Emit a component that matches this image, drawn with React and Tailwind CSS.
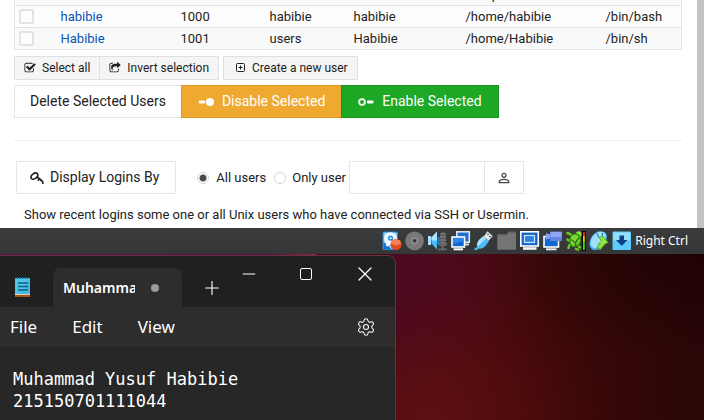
import React from "react";
import { Settings, Plus, X, Minus } from "lucide-react";
import { MdPersonOutline } from "react-icons/md";

const users = [
  { name: "habibie", uid: "1000", group: "habibie", real: "habibie", home: "/home/habibie", shell: "/bin/bash" },
  { name: "Habibie", uid: "1001", group: "users", real: "Habibie", home: "/home/Habibie", shell: "/bin/sh" },
];

function CheckIcon() {
  return (
    <svg viewBox="0 0 1792 1792" className="size-3" fill="currentColor" aria-hidden="true">
      <path d="M1472 930v318q0 119-84.5 203.5t-203.5 84.5h-832q-119 0-203.5-84.5t-84.5-203.5v-832q0-119 84.5-203.5t203.5-84.5h832q63 0 117 25 15 7 18 23 3 17-9 29l-49 49q-10 10-23 10-3 0-9-2-23-6-45-6h-832q-66 0-113 47t-47 113v832q0 66 47 113t113 47h832q66 0 113-47t47-113v-254q0-13 9-22l64-64q10-10 23-10 6 0 12 3 20 8 20 29zm231-489l-814 814q-24 24-57 24t-57-24l-430-430q-24-24-24-57t24-57l110-110q24-24 57-24t57 24l263 263 647-647q24-24 57-24t57 24l110 110q24 24 24 57t-24 57z" />
    </svg>
  );
}

function InvertIcon() {
  return (
    <svg viewBox="0 0 1792 1792" className="size-3" fill="currentColor" aria-hidden="true">
      <path d="M1472 989v259q0 119-84.5 203.5t-203.5 84.5h-832q-119 0-203.5-84.5t-84.5-203.5v-832q0-119 84.5-203.5t203.5-84.5h255q13 0 22.5 9.5t9.5 22.5q0 27-26 32-77 26-133 60-10 4-16 4h-112q-66 0-113 47t-47 113v832q0 66 47 113t113 47h832q66 0 113-47t47-113v-214q0-19 18-29 28-13 54-37 16-16 35-8 21 9 21 29zm237-496l-384 384q-18 19-45 19-12 0-25-5-39-17-39-59v-192h-160q-323 0-438 131-119 137-74 473 3 23-20 34-8 2-12 2-16 0-26-13-10-14-21-31t-39.5-68.5-49.5-99.5-38.5-114-17.5-122q0-49 3.5-91t14-90 28-88 47-81.5 68.5-74 94.5-61.5 124.5-48.5 159.5-30.5 196.5-11h160v-192q0-42 39-59 13-5 25-5 26 0 45 19l384 384q19 19 19 45t-19 45z" />
    </svg>
  );
}

function PlusBoxIcon() {
  return (
    <svg viewBox="0 0 10 10" className="size-[10px]" fill="none" stroke="currentColor" aria-hidden="true">
      <rect x="0.5" y="0.5" width="8" height="8" rx="1" />
      <path d="M4.5 2.5v4M2.5 4.5h4" />
    </svg>
  );
}

function ToggleOffIcon() {
  return (
    <svg viewBox="0 0 16 10" className="h-[10px] w-4" fill="currentColor" aria-hidden="true">
      <rect x="0.8" y="3.4" width="6.4" height="3" rx="1" />
      <circle cx="12" cy="5" r="4" />
    </svg>
  );
}

function ToggleOnIcon() {
  return (
    <svg viewBox="0 0 16 10" className="h-[10px] w-4" fill="currentColor" aria-hidden="true">
      <circle cx="4" cy="5" r="2.9" fill="none" stroke="currentColor" strokeWidth="1.8" />
      <rect x="9" y="3.5" width="6.4" height="3" rx="1" />
    </svg>
  );
}

function KeyIcon() {
  return (
    <svg viewBox="0 0 14 14" className="size-[14px]" fill="none" stroke="currentColor" aria-hidden="true">
      <ellipse cx="4.4" cy="5.2" rx="3.8" ry="2.5" strokeWidth="1.6" transform="rotate(-38 4.4 5.2)" />
      <path d="M6.6 5.6L12.6 10.6" strokeWidth="1.9" />
      <path d="M9.2 8l-1.3 1.7M12.8 10.2v2.8" strokeWidth="1.5" />
    </svg>
  );
}

function NotepadIcon() {
  return (
    <svg viewBox="0 0 16 20" className="h-5 w-4" aria-hidden="true">
      <rect x="0" y="16" width="15" height="4" rx="0.6" fill="#a8560f" />
      <rect x="0" y="16" width="15" height="1.8" fill="#f3ede4" />
      <rect x="0" y="1" width="15" height="16" rx="0.6" fill="#50c4e6" />
      <path d="M15 3v14H3z" fill="#37addb" opacity=".5" />
      <path d="M2.500 0v2M5 0v2M7.500 0v2M10 0v2M12.500 0v2" stroke="#0b6c94" strokeWidth="1.2" />
      <path d="M3 6h10M3 9.5h10M3 13h10" stroke="#0f5f8c" strokeWidth="1.4" />
    </svg>
  );
}

const dock = "size-5 shrink-0";

function DiskIcon() {
  return (
    <svg viewBox="0 0 20 20" className={dock} aria-hidden="true">
      <rect x="0.5" y="0.5" width="15.500" height="18.500" rx="1.5" fill="#1e87d8" />
      <rect x="1.5" y="1.5" width="13.500" height="16.500" rx="1" fill="#8fd4fb" />
      <path d="M1.5 11l8 7h-8z" fill="#1273cc" />
      <circle cx="8.5" cy="7.6" r="6.4" fill="#eef7fd" />
      <circle cx="8.5" cy="7.2" r="2.6" fill="#2a8fdd" />
      <circle cx="8.5" cy="7.2" r="1" fill="#fff" />
      <path d="M3.500 14.500l4.500-5 1.5 2-4 4z" fill="#fff" />
      <circle cx="14" cy="13.500" r="5.500" fill="#e04a1e" />
      <path d="M8.900 12.500a5.200 5.200 0 0 1 10.200 0q-5 3.500-10.200 0z" fill="#f5805a" />
    </svg>
  );
}

function DiscIcon() {
  return (
    <svg viewBox="0 0 20 20" className={dock} aria-hidden="true">
      <circle cx="9.6" cy="9.8" r="9.4" fill="#787878" />
      <circle cx="9.6" cy="9.8" r="4" fill="#888888" />
      <circle cx="9.6" cy="9.8" r="1.7" fill="#353638" />
    </svg>
  );
}

function AudioIcon() {
  return (
    <svg viewBox="0 0 20 20" className={dock} aria-hidden="true">
      <rect x="12" y="1.500" width="6" height="12" rx="2" fill="#707070" />
      <path d="M12 4.500h6M12 7.500h6M12 10.500h6" stroke="#565656" />
      <path d="M10.500 13q4.500 3.500 8.500-0.500M14.800 15v3M10 18.300h9" stroke="#6b6b6b" strokeWidth="1.800" fill="none" />
      <rect x="0" y="5" width="3" height="9" fill="#a5e2ff" />
      <path d="M3.500 6.500L9 0.500v18L3.500 12.500z" fill="#4bbdf6" />
      <path d="M3.500 6.500L9 0.500v9H3.500z" fill="#a9e5fe" />
      <rect x="9.600" y="6" width="2" height="7" fill="#2089d8" />
    </svg>
  );
}

function NetworkIcon() {
  return (
    <svg viewBox="0 0 20 20" className={dock} aria-hidden="true">
      <rect x="5.800" y="0.800" width="12.500" height="10.400" fill="#1d70ce" stroke="#e8edf3" strokeWidth="1.500" />
      <path d="M13 13.500h5" stroke="#d7dce2" strokeWidth="2" />
      <rect x="1" y="6" width="12.500" height="10" fill="#0c67d1" stroke="#fff" strokeWidth="1.600" />
      <path d="M2 7h10.500v3L2 13z" fill="#3082e2" />
      <path d="M2.500 18.300h9.500" stroke="#fff" strokeWidth="2" />
    </svg>
  );
}

function UsbIcon() {
  return (
    <svg viewBox="0 0 20 20" className={dock} aria-hidden="true">
      <path d="M0.500 18q2 0.500 4-2" stroke="#45b6f1" strokeWidth="2.400" fill="none" />
      <path d="M9.500 5l5.500 5-3.500 5q-4 4-8 2-2-4 1.500-8z" fill="#4fbcf5" />
      <path d="M9.500 5l2.500 2.200L4 15.500q-2-2 1-6.500z" fill="#a7e3ff" />
      <path d="M13.500 0.500l5 4.500-4 4.500-4.500-4z" fill="#ececec" stroke="#aeb3b7" strokeWidth=".6" />
      <path d="M13.500 3l1 1M15.500 5l1 1" stroke="#4a4c4e" strokeWidth="1.500" />
    </svg>
  );
}

function FolderIcon() {
  return (
    <svg viewBox="0 0 20 20" className={dock} aria-hidden="true">
      <path d="M0.500 3h9l2-2.500h7.500v18H0.500z" fill="#626262" />
      <path d="M0.500 4.500h9.500l2-2.500h7v16.500H0.500z" fill="#757575" />
    </svg>
  );
}

function DisplayIcon() {
  return (
    <svg viewBox="0 0 20 20" className={dock} aria-hidden="true">
      <rect x="0.800" y="0.800" width="17.500" height="14.200" fill="#0e63cb" stroke="#fff" strokeWidth="1.600" />
      <rect x="2.600" y="2.600" width="13.900" height="10.600" fill="#1268cd" />
      <rect x="4.500" y="4.500" width="10" height="7" fill="#2f80e0" stroke="#cfe5fb" strokeWidth="1.200" />
      <path d="M3 17.500h13.500" stroke="#f4f6f8" strokeWidth="2.600" />
    </svg>
  );
}

function RecordIcon() {
  return (
    <svg viewBox="0 0 20 20" className={dock} aria-hidden="true">
      <rect x="1" y="5.500" width="14.500" height="10.500" fill="#0d69d1" stroke="#fff" strokeWidth="1.600" />
      <path d="M3 18.300h10.500" stroke="#e9edf0" strokeWidth="2" />
      <rect x="7" y="0.500" width="12" height="9.500" rx="1" fill="#6684e4" />
      <rect x="7.500" y="1" width="11" height="5" fill="#8fa6f3" />
      <path d="M3 2L7 3.500v4L3 8.500z" fill="#8aa0ef" />
    </svg>
  );
}

function TurtleIcon() {
  return (
    <svg viewBox="0 0 20 20" className={dock} aria-hidden="true">
      <path d="M0.500 2.500q3-1 5 2M0.500 8l3 2M2.500 18q0-4 2-5M9 17.500l4 1.500M12 15l3 2" stroke="#66cc1c" strokeWidth="2.400" fill="none" />
      <circle cx="12.800" cy="3.200" r="2.900" fill="#8ee23a" />
      <path d="M5 4q5-3.500 9 0.500 2.500 5-0.500 9-4 4-8.500 2-4-5 0-11.500z" fill="#358f12" />
      <path d="M5.800 5q4-2.800 7.200 0.500 2 4-0.500 7.200-3 3-6.500 1.500-3-4-0.200-9.200z" fill="#7ed634" />
      <path d="M5 8.500l4.500 3.500 3.500-5.500M9.500 12v3" stroke="#28740f" strokeWidth="1.500" fill="none" />
      <rect x="15.800" y="0" width="4" height="20" fill="#070707" />
      <rect x="17" y="1" width="1.800" height="4" fill="#ee2b10" />
      <rect x="17" y="5" width="1.800" height="6" fill="#f5c400" />
      <rect x="17" y="11" width="1.800" height="8" fill="#32df0a" />
    </svg>
  );
}

function MouseIcon() {
  return (
    <svg viewBox="0 0 20 20" className={dock} aria-hidden="true">
      <path d="M9 0.500q7-1 8.500 3 1.500 6-3.500 11-4 5-9 4.500-5-1.500-4.500-7Q2 3 9 0.500z" fill="#4bb2ec" />
      <path d="M9 1q6-1 7.500 2.500 1 5-3.500 9.500-4 4.500-8 4-4-1.500-3.500-6Q3 4 9 1z" fill="#a0dffb" />
      <path d="M8 2q1 5 4 5.500 2-2 1.500-5.500" stroke="#2c84be" strokeWidth="1.200" fill="none" />
      <path d="M9 5.500h5.500l5 6-3.500 2-5 6-3.500-3.500 3-3.500H8l4-2z" fill="#54b51d" />
      <path d="M10 6.300h4l4.500 5-3.500 1.700-4 5-2-2 3.500-4h-2.500l3-2.500z" fill="#94e544" />
    </svg>
  );
}

function CaptureIcon() {
  return (
    <svg viewBox="0 0 20 20" className={dock} aria-hidden="true">
      <rect x="0.500" y="0.500" width="18.500" height="18.500" rx="1" fill="#5ecbfc" />
      <rect x="1.500" y="1.500" width="16.500" height="8" fill="#94defe" />
      <path d="M7.500 4.500h4.500v4.500h3.500L9.800 15 4 9h3.500z" fill="#0b3f88" />
    </svg>
  );
}

function UserTable() {
  return (
    <table className="-mt-[17px] w-full table-fixed border-collapse border border-[#e5e6e6] text-[13px] leading-4">
      <colgroup>
        <col className="w-10" />
        <col className="w-[120px]" />
        <col className="w-[89px]" />
        <col className="w-[84px]" />
        <col className="w-[112px]" />
        <col className="w-[140px]" />
        <col />
      </colgroup>
      <tbody>
        <tr className="h-[22px] bg-[#f8fafa]">
          <td /><td /><td /><td /><td />
          <td className="px-[6px] py-0">/snap/</td>
          <td />
        </tr>
        {users.map((u) => (
          <tr key={u.name} className="h-[22px] border-t border-[#e0e1e1] bg-white even:bg-[#fdfdfd] last:bg-[#f8fafa]">
            <td className="p-0 pb-px pl-1 align-middle">
              <input
                type="checkbox"
                aria-label={`Select ${u.name}`}
                className="block size-[15px] appearance-none rounded-[2px] border-2 border-[#e2e3e3] bg-white/50"
              />
            </td>
            <td className="px-[6px] py-0"><a href="#" className="text-[#0a52b4]">{u.name}</a></td>
            <td className="px-[6px] py-0">{u.uid}</td>
            <td className="px-[6px] py-0">{u.group}</td>
            <td className="px-[6px] py-0">{u.real}</td>
            <td className="px-[6px] py-0">{u.home}</td>
            <td className="px-[6px] py-0">{u.shell}</td>
          </tr>
        ))}
      </tbody>
    </table>
  );
}

const smallButton = "flex h-6 items-center gap-[6px] border border-[#e0e0e0] bg-[#f5f5f5] pr-[9px] text-[12px]";
const bigButton = "flex h-[33px] items-center border text-[14px]";
const radio =
  "size-3 appearance-none rounded-full border border-[#d4d4d4] bg-white checked:bg-[radial-gradient(circle,#4a4a4a_3px,#ffffff_4px)]";

function AdminPage() {
  return (
    <section className="flex h-[228px] overflow-hidden bg-white font-[Roboto,'Liberation_Sans',sans-serif] text-[#222]">
      <div className="min-w-0 flex-1 pr-[15px] pl-[14px]">
        <UserTable />
        <div className="mt-[6px] flex">
          <button className={`${smallButton} pl-[9px]`}><CheckIcon />Select all</button>
          <button className={`${smallButton} -ml-px pl-[9px]`}><InvertIcon />Invert selection</button>
          <button className={`${smallButton} ml-1 pl-3`}><PlusBoxIcon />Create a new user</button>
        </div>
        <div className="mt-[5px] flex">
          <button className={`${bigButton} border-[#e5e5e5] bg-white px-[15px]`}>Delete Selected Users</button>
          <button className={`${bigButton} -ml-px gap-2 border-[#dc9a25] bg-[#f0a930] px-4 text-white`}><ToggleOffIcon />Disable Selected</button>
          <button className={`${bigButton} -ml-px gap-2 border-[#18901f] bg-[#1da825] px-4 text-white`}><ToggleOnIcon />Enable Selected</button>
        </div>
        <hr className="mt-[22px] border-[#eeeeee]" />
        <form className="mt-5 flex items-center pl-[2px] text-[13px]" onSubmit={(e) => e.preventDefault()}>
          <button className={`${bigButton} gap-[6px] border-[#e5e5e5] bg-white pr-4 pl-[13px]`}><KeyIcon />Display Logins By</button>
          <label className="ml-[21px] flex items-center gap-[7px]">
            <input type="radio" name="logins" defaultChecked className={radio} />All users
          </label>
          <label className="ml-2 flex items-center gap-[6px]">
            <input type="radio" name="logins" className={radio} />Only user
          </label>
          <input type="text" aria-label="User name" className="ml-[3px] h-[33px] w-[136px] border border-[#e5e5e5] bg-white px-2" />
          <button type="button" aria-label="Choose user" className="-ml-px flex h-[33px] w-10 items-center justify-center border border-[#e5e5e5] text-[#444]">
            <MdPersonOutline size={16} />
          </button>
        </form>
        <p className="mt-3 pl-[10px] text-[13px] leading-[18px]">Show recent logins some one or all Unix users who have connected via SSH or Usermin.</p>
      </div>
      <div className="w-[7px] bg-[#c1c3c2]" />
    </section>
  );
}

function StatusBar() {
  return (
    <div className="flex h-[26px] items-center justify-end gap-[3px] bg-linear-to-b from-[#3a3b3d] to-[#343637] pr-4 font-['Noto_Sans','Open_Sans',sans-serif] text-[12px] text-white">
      <DiskIcon />
      <DiscIcon />
      <AudioIcon />
      <NetworkIcon />
      <UsbIcon />
      <FolderIcon />
      <DisplayIcon />
      <RecordIcon />
      <TurtleIcon />
      <MouseIcon />
      <CaptureIcon />
      <span>Right Ctrl</span>
    </div>
  );
}

function Notepad() {
  return (
    <div className="mt-px flex w-[396px] flex-col overflow-hidden rounded-tr-lg border-t border-r border-[#64313f] bg-[#272727] font-['Noto_Sans','Open_Sans',sans-serif] text-white">
      <div className="flex h-[51px] items-end bg-[#202020] pl-[15px]">
        <div className="mb-[10px]"><NotepadIcon /></div>
        <div className="ml-[22px] flex h-[39px] w-[129px] items-center rounded-t-lg bg-[#2d2d2d] pl-[10px]">
          <span className="w-[72px] overflow-hidden text-[14px] font-semibold whitespace-nowrap">Muhammad</span>
          <span className="ml-4 size-2 rounded-full bg-[#9b9b9b]" />
        </div>
        <button aria-label="New tab" className="mb-2 ml-[19px]"><Plus size={22} strokeWidth={1.25} /></button>
        <div className="mb-[21px] ml-auto flex items-center gap-[41px] pr-[18px]">
          <button aria-label="Minimize"><Minus size={20} strokeWidth={1.25} /></button>
          <button aria-label="Maximize" className="size-3 rounded-[2px] border border-white" />
          <button aria-label="Close"><X size={24} strokeWidth={1.25} /></button>
        </div>
      </div>
      <div className="flex h-10 items-center bg-[#2d2d2d] pr-[19px] pl-[10px] text-[17px]">
        <button>File</button>
        <button className="ml-[35px]">Edit</button>
        <button className="ml-[35px]">View</button>
        <button aria-label="Settings" className="ml-auto"><Settings size={20} strokeWidth={1.25} /></button>
      </div>
      <textarea
        aria-label="Document text"
        className="w-full flex-1 resize-none overflow-hidden bg-transparent pt-[21px] pl-[13px] font-['DejaVu_Sans_Mono',monospace] text-[17px] leading-[22px] outline-none"
        defaultValue={"Muhammad Yusuf Habibie\n215150701111044"}
      />
    </div>
  );
}

export default function App() {
  return (
    <main className="flex min-h-screen flex-col">
      <AdminPage />
      <StatusBar />
      <div className="flex flex-1 bg-[linear-gradient(to_right,#650c58,#5a0c42_270px,#9a2444_316px),radial-gradient(ellipse_130px_110px_at_410px_10%,#4e0a24cc,transparent),radial-gradient(ellipse_180px_150px_at_430px_100%,#621010cc,transparent),radial-gradient(ellipse_200px_110px_at_704px_0%,#200304,transparent),linear-gradient(to_right,#480a18_396px,#4c0a12_440px,#3c0808_550px,#2a0607)] bg-[length:316px_1px,100%_100%,100%_100%,100%_100%,100%_100%] bg-no-repeat">
        <Notepad />
      </div>
    </main>
  );
}
